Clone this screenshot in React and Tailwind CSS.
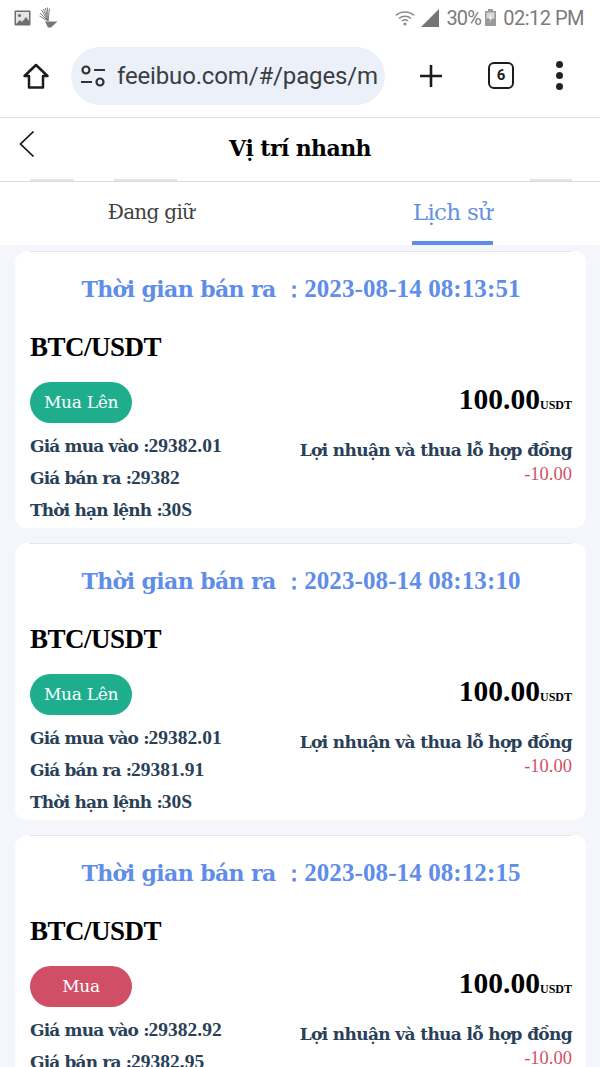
import React from 'react';

const serif = { fontFamily: '"DejaVu Serif", serif' };
// digits and capitals sit closer to the reference in this one
const digits = { fontFamily: '"Liberation Serif", serif' };

const orders = [
  { time: '2023-08-14 08:13:51', side: 'Mua Lên', buy: '29382.01', sell: '29382' },
  { time: '2023-08-14 08:13:10', side: 'Mua Lên', buy: '29382.01', sell: '29381.91' },
  { time: '2023-08-14 08:12:15', side: 'Mua', buy: '29382.92', sell: '29382.95' },
];

function StatusBar() {
  return (
    <div className="h-[35px] shrink-0 flex items-center justify-between pl-[14px] pr-[16px] text-[#7b7b7b] font-['Roboto',sans-serif]">
      <div className="flex items-center gap-[8px]">
        <svg width="17" height="16" viewBox="0 0 17 16">
          <rect x="0.5" y="0.5" width="16" height="15" rx="1" fill="#6f6f6f" />
          <rect x="2" y="2" width="13" height="12" fill="#e4e4e4" />
          <circle cx="5.5" cy="5.5" r="1.6" fill="#6f6f6f" />
          <path d="M2 14l4-4 2 2 4-5 3 4v3z" fill="#6f6f6f" />
        </svg>
        <svg width="19" height="21" viewBox="0 0 19 21" stroke="#808080" strokeWidth="1" fill="none">
          <path d="M9 14L2.500 3M9 14L4.500 2M9 14L6.500 1M9 14L8.500 0.500M9 14L10.500 1.500M9 14L1 6M9 14L0.500 9" />
          <path d="M6 14.500h12.500L12 20.500H9z" fill="#777" stroke="none" />
        </svg>
      </div>
      <div className="flex items-center text-[20px] leading-none">
        <svg width="20" height="16" viewBox="0 0 20 16" fill="none" stroke="#8a8a8a" strokeWidth="1.5" className="mr-[6px]">
          <path d="M1 5.500c5-4.600 13-4.600 18 0M4 8.500c3.400-3 8.600-3 12 0M7 11c1.700-1.400 4.300-1.400 6 0" />
          <circle cx="10" cy="14" r="1.500" fill="#8a8a8a" stroke="none" />
        </svg>
        <svg width="18" height="18" viewBox="0 0 18 18" className="mr-[7px]">
          <path d="M18 0v18H0z" fill="#757575" />
        </svg>
        <span className="tracking-[-0.8px]">30%</span>
        <svg width="11" height="17" viewBox="0 0 11 17" className="ml-[4px] mr-[7px]">
          <rect x="3" y="0" width="5" height="2" fill="#999" />
          <rect x="0" y="2" width="11" height="15" fill="#9a9a9a" />
          <rect x="1.500" y="3.500" width="8" height="6" fill="#d8d8d8" />
          <path d="M6.500 4L3.500 9.500h2L4.500 14l3-6h-2z" fill="#f3f3f3" />
        </svg>
        <span className="tracking-[-0.5px]">02:12 PM</span>
      </div>
    </div>
  );
}

function BrowserBar() {
  return (
    <div className="h-[83px] shrink-0 flex items-center border-b border-[#dedede] font-['Roboto',sans-serif] pb-[1px]">
      <div className="w-[71px] flex justify-center">
        <svg width="28" height="28" viewBox="0 0 28 28" fill="none" stroke="#1c1c1c" strokeWidth="2.500" strokeLinejoin="round">
          <path d="M14 3L2.500 14H7v11.500h14V14h4.500z" />
        </svg>
      </div>
      <div className="w-[314px] h-[58px] rounded-full bg-[#ebf0f9] flex items-center pl-[9px]">
        <svg width="27" height="24" viewBox="0 0 27 24" fill="none" stroke="#333" strokeWidth="2.200" className="mr-[10px] shrink-0">
          <circle cx="6" cy="6" r="3.500" />
          <path d="M14 6h11M1 18h11" />
          <circle cx="20" cy="18" r="3.500" />
        </svg>
        <span className="text-[24px] tracking-[-0.15px] text-[#3a3d42] whitespace-nowrap">feeibuo.com/#/pages/m</span>
      </div>
      <svg width="24" height="24" viewBox="0 0 24 24" stroke="#1c1c1c" strokeWidth="2.600" className="ml-[34px] shrink-0">
        <path d="M12 1v22M1 12h22" />
      </svg>
      <div className="ml-[45px] w-[26px] h-[27px] shrink-0 rounded-[6px] border-[2.500px] border-[#1c1c1c] flex items-center justify-center text-[15px] font-bold text-[#1c1c1c]">
        6
      </div>
      <div className="ml-[42px] flex flex-col gap-[4px] shrink-0">
        <div className="w-[7px] h-[7px] rounded-full bg-[#222]" />
        <div className="w-[7px] h-[7px] rounded-full bg-[#222]" />
        <div className="w-[7px] h-[7px] rounded-full bg-[#222]" />
      </div>
    </div>
  );
}

function NavHeader() {
  return (
    <div className="relative h-[64px] shrink-0 flex items-center justify-center border-b border-[#dcdcdc]">
      <svg width="18" height="28" viewBox="0 0 18 28" fill="none" stroke="#111" strokeWidth="1.700" className="absolute left-[18px] top-[12px]">
        <path d="M15.500 1.500L2.500 14l13 12.500" />
      </svg>
      <span className="text-[22px] font-bold text-black tracking-[-0.6px] pb-[2px]" style={serif}>Vị trí nhanh</span>
      {/* clipped row of the list scrolling under the header */}
      <div className="absolute left-[30px] right-[28px] bottom-0 h-[2px] flex justify-between">
        <div className="flex gap-[40px]">
          <div className="w-[44px] h-full bg-[#e4e4e4]" />
          <div className="w-[63px] h-full bg-[#e4e4e4]" />
        </div>
        <div className="w-[42px] h-full bg-[#e4e4e4]" />
      </div>
    </div>
  );
}

function Tabs() {
  return (
    <div className="h-[63px] shrink-0 flex bg-white" style={serif}>
      <div className="w-[303px] flex justify-center pt-[15px] pr-[1px] text-[20px] tracking-[-0.7px] text-[#3f3f3f] leading-[30px]">Đang giữ</div>
      <div className="flex-1 flex justify-center pl-[2px]">
        <div className="h-[63px] w-[81px] border-b-[4px] border-[#5d8ee8] pt-[15px] text-[23px] tracking-[-0.7px] text-[#668fe6] leading-[30px] whitespace-nowrap flex justify-center">Lịch sử</div>
      </div>
    </div>
  );
}

function OrderCard({ order }) {
  const isUp = order.side === 'Mua Lên';
  return (
    <div className="h-[277px] shrink-0 rounded-[12px] bg-white pt-[23px] pl-[15px] pr-[14px] relative" style={serif}>
      <div className="absolute top-0 left-[14px] right-[14px] h-px bg-[#e6e6ea]" />
      <div className="flex justify-center items-baseline text-[22px] leading-[30px] font-bold text-[#5f8dea] whitespace-nowrap">
        <span className="tracking-[-0.6px]">Thời gian bán ra ：</span>
        <span className="text-[25px] tracking-[0.1px]" style={digits}>{order.time}</span>
      </div>
      <div className="mt-[27px] text-[27px] leading-[32px] font-bold text-black tracking-[-0.5px]" style={digits}>BTC/USDT</div>
      <div className="mt-[19px] flex items-start justify-between">
        <div>
          <div className={`w-[102px] h-[41px] rounded-full flex items-center justify-center text-white text-[17px] tracking-[-0.3px] ${isUp ? 'bg-[#1eae8e]' : 'bg-[#d04e66]'}`}>
            {order.side}
          </div>
          <div className="mt-[7px] text-[17px] leading-[31px] font-bold text-[#2a3f58] tracking-[-0.85px] whitespace-nowrap">
            <div>Giá mua vào :<span className="text-[19.5px] tracking-normal" style={digits}>{order.buy}</span></div>
            <div>Giá bán ra :<span className="text-[19.5px] tracking-normal" style={digits}>{order.sell}</span></div>
            <div>Thời hạn lệnh :<span className="text-[19.5px] tracking-normal" style={digits}>30S</span></div>
          </div>
        </div>
        <div className="text-right whitespace-nowrap">
          <div className="flex items-baseline justify-end font-bold text-black -mt-[1px]" style={digits}>
            <span className="text-[29.5px] leading-[36px]">100.00</span>
            <span className="text-[12px]">USDT</span>
          </div>
          <div className="mt-[21px] text-[17px] leading-[24px] font-bold text-[#2a3f58] tracking-[-0.65px]">Lợi nhuận và thua lỗ hợp đồng</div>
          <div className="text-[18.5px] leading-[24px] text-[#cf5169]" style={digits}>-10.00</div>
        </div>
      </div>
    </div>
  );
}

export default function App() {
  return (
    <div className="w-[600px] h-[1067px] overflow-hidden bg-white flex flex-col">
      <StatusBar />
      <BrowserBar />
      <NavHeader />
      <Tabs />
      <div className="flex-1 overflow-hidden bg-[#f5f6fb] pl-[15px] pr-[14px] pt-[6px] flex flex-col gap-[15px]">
        {orders.map((o) => (
          <OrderCard key={o.time} order={o} />
        ))}
      </div>
    </div>
  );
}
